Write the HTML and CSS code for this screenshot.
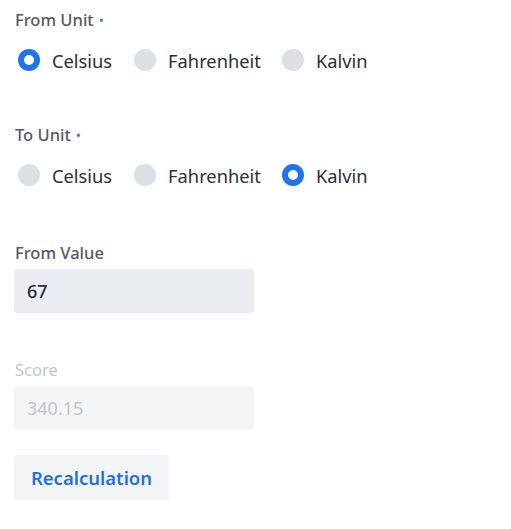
FILE: index.html
```html
<!DOCTYPE html>
<html>
<head>
<meta charset="utf-8">
<link rel="stylesheet" href="styles.css">
</head>
<body>
<div class="form">
  <div class="field radio-field">
    <div class="label">From Unit <span class="req">•</span></div>
    <div class="radios">
      <label class="radio"><span class="dot checked"></span><span class="rtext">Celsius</span></label>
      <label class="radio"><span class="dot"></span><span class="rtext">Fahrenheit</span></label>
      <label class="radio"><span class="dot"></span><span class="rtext">Kalvin</span></label>
    </div>
  </div>
  <div class="field radio-field">
    <div class="label">To Unit <span class="req">•</span></div>
    <div class="radios">
      <label class="radio"><span class="dot"></span><span class="rtext">Celsius</span></label>
      <label class="radio"><span class="dot"></span><span class="rtext">Fahrenheit</span></label>
      <label class="radio"><span class="dot checked"></span><span class="rtext">Kalvin</span></label>
    </div>
  </div>
  <div class="field input-field">
    <div class="label">From Value</div>
    <div class="input value">67</div>
  </div>
  <div class="field input-field disabled">
    <div class="label">Score</div>
    <div class="input">340.15</div>
  </div>
  <button class="btn">Recalculation</button>
</div>
</body>
</html>
```
FILE: styles.css
```css
body {
  margin: 0;
  font-family: "Noto Sans", "Open Sans", sans-serif;
  background: #fff;
  color: #2b2f36;
}
.form {
  padding: 8px 14px 0 14px;
  display: flex;
  flex-direction: column;
  align-items: flex-start;
}
.label {
  font-size: 16.5px;
  line-height: 24px;
  font-weight: 500;
  color: #545a63;
  padding-left: 1px;
}
.req {
  color: #2f7af0;
  font-size: 12px;
  vertical-align: 1px;
  margin-left: 1px;
}
.radio-field { margin-bottom: 49px; }
.radio-field:nth-child(2) { margin-bottom: 52px; }
.radios {
  display: flex;
  margin-top: 13px;
  height: 28px;
  align-items: center;
  padding-left: 4px;
}
.radio {
  display: flex;
  align-items: center;
  margin-right: 21px;
}
.radio:first-child { margin-right: 22px; }
.dot {
  width: 22px;
  height: 22px;
  border-radius: 50%;
  background: #dcdfe4;
  box-sizing: border-box;
  margin-right: 12px;
}
.dot.checked {
  background: #fff;
  border: 6px solid #1f74ec;
}
.rtext {
  font-size: 18.3px;
  color: #2b2f36;
}
.input-field { margin-bottom: 45px; }
.input-field.disabled { margin-bottom: 25px; }
.input {
  margin-top: 4px;
  width: 240px;
  height: 44px;
  box-sizing: border-box;
  border-radius: 4px;
  background: #e9ecf0;
  padding-left: 13px;
  font-size: 18px;
  line-height: 44px;
  color: #2b2f36;
}
.input.value { font-weight: 500; }
.disabled .label { color: #c3c7cc; font-weight: 400; }
.disabled .input { background: #f3f4f6; color: #c0c4c9; }
.btn {
  border: none;
  background: #f3f4f6;
  border-radius: 4px;
  height: 45px;
  width: 155px;
  font-family: inherit;
  font-size: 18.5px;
  font-weight: 600;
  color: #1f6fe0;
  padding: 0;
}
```
